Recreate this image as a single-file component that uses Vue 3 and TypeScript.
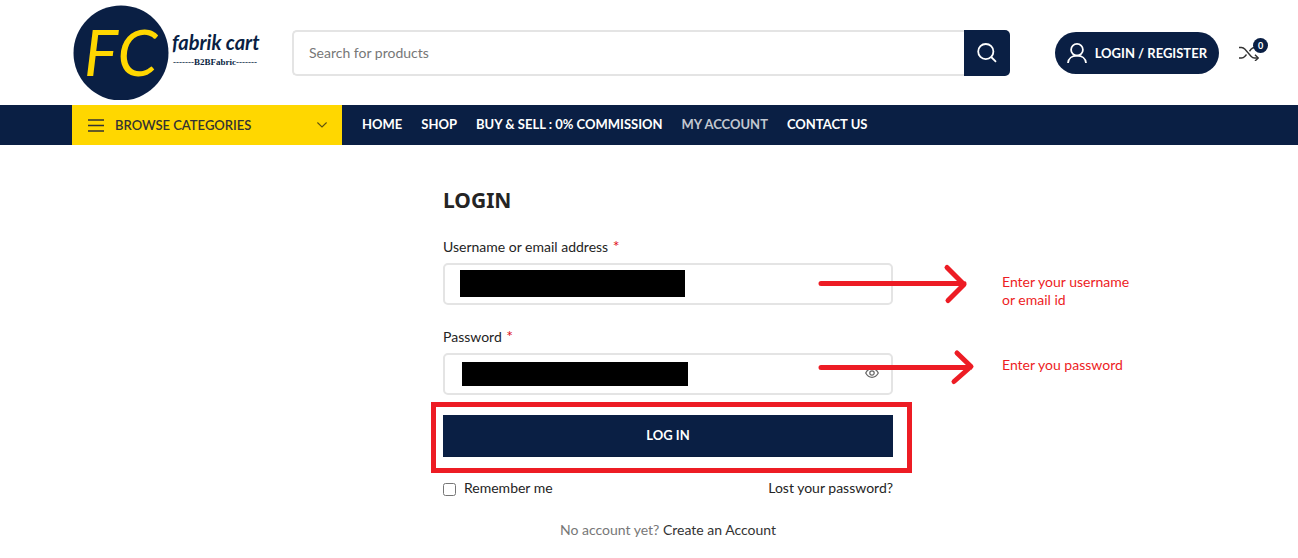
<script setup lang="ts">
import { ref } from 'vue'

interface NavLink {
  label: string
  active?: boolean
}

const links: NavLink[] = [
  { label: 'HOME' },
  { label: 'SHOP' },
  { label: 'BUY & SELL : 0% COMMISSION' },
  { label: 'MY ACCOUNT', active: true },
  { label: 'CONTACT US' },
]

const search = ref('')
const username = ref('')
const password = ref('')
const remember = ref(false)
const compareCount = ref(0)
</script>

<template>
  <div class="page">
    <header class="header">
      <a href="#" class="logo" aria-label="fabrik cart">
        <svg width="190" height="100" viewBox="0 0 190 100">
          <circle cx="49" cy="53" r="47.5" fill="#0a1f44" />
          <text x="12" y="76" class="monogram">FC</text>
          <text x="100" y="50" class="wordmark">fabrik cart</text>
          <text x="101" y="65" class="tagline">-------B2BFabric-------</text>
        </svg>
      </a>

      <form class="search" role="search" @submit.prevent>
        <input v-model="search" type="text" placeholder="Search for products" aria-label="Search for products" />
        <button type="submit" aria-label="Search">
          <svg width="20" height="20" viewBox="0 0 20 20" fill="none" stroke="#fff" stroke-width="1.8">
            <circle cx="8.8" cy="8.6" r="7.6" />
            <path d="M14.2 14 19 18.8" />
          </svg>
        </button>
      </form>

      <a href="#" class="account">
        <svg width="20" height="20" viewBox="0 0 20 20" fill="none" stroke="#fff" stroke-width="1.8">
          <circle cx="10" cy="6.8" r="5.9" />
          <path d="M1 20C1.4 15.400 5 12.700 10 12.700S18.600 15.400 19 20" />
        </svg>
        <span>LOGIN / REGISTER</span>
      </a>

      <a href="#" class="compare" aria-label="Compare">
        <svg width="20" height="16" viewBox="0 0 20 16" fill="none" stroke="#333" stroke-width="1.4">
          <path d="M0 2.500H2.500C4 2.500 5 3.200 6 4.300L12 11.200C13 12.300 14 13 15.500 13H19" />
          <path d="M0 13H2.500C4 13 5 12.300 6 11.200L7.500 9.500M10.500 6.200 12 4.300C13 3.200 14 2.500 15.500 2.500H19" />
          <path d="M16 9.800 19.200 13 16 16" />
        </svg>
        <span class="count">{{ compareCount }}</span>
      </a>
    </header>

    <nav class="navbar">
      <button type="button" class="browse">
        <svg width="16" height="13" viewBox="0 0 16 13" stroke="#333" stroke-width="1.300">
          <path d="M0 1H16M0 6.500H16M0 12H16" />
        </svg>
        <span>BROWSE CATEGORIES</span>
        <svg class="chevron" width="10" height="6" viewBox="0 0 10 6" fill="none" stroke="#5f5210" stroke-width="1.100">
          <path d="M0.400 0.500 5 5 9.600 0.500" />
        </svg>
      </button>
      <ul class="links">
        <li v-for="link in links" :key="link.label">
          <a href="#" :class="{ active: link.active }">{{ link.label }}</a>
        </li>
      </ul>
    </nav>

    <main class="main">
      <form class="login" @submit.prevent>
        <h1>LOGIN</h1>

        <div class="field">
          <label for="username">Username or email address <span class="required">*</span></label>
          <div class="control">
            <input id="username" v-model="username" type="text" autocomplete="username" />
            <span class="redaction user-mask"></span>
            <svg class="arrow" width="160" height="42" viewBox="0 0 160 42">
              <path d="M3 20.500H146M129 4.500 146 21.500 130 37.500" />
            </svg>
            <p class="note">Enter your username<br />or email id</p>
          </div>
        </div>

        <div class="field">
          <label for="password">Password <span class="required">*</span></label>
          <div class="control">
            <input id="password" v-model="password" type="password" autocomplete="current-password" />
            <span class="redaction pass-mask"></span>
            <button type="button" class="reveal" aria-label="Show password">
              <svg width="14" height="10" viewBox="0 0 14 10" fill="none" stroke="#666" stroke-width="1.200">
                <path d="M0.700 5C2.200 2.200 4.300 0.700 7 0.700S11.800 2.200 13.300 5C11.800 7.800 9.700 9.300 7 9.300S2.200 7.800 0.700 5Z" />
                <circle cx="7" cy="5" r="2.200" />
              </svg>
            </button>
            <svg class="arrow" width="160" height="42" viewBox="0 0 160 42">
              <path d="M3 14.500H152M139 0 153 13.500 136 28.500" />
            </svg>
            <p class="note">Enter you password</p>
          </div>
        </div>

        <div class="submit">
          <button type="submit">LOG IN</button>
        </div>

        <div class="options">
          <label class="remember"><input v-model="remember" type="checkbox" />Remember me</label>
          <a href="#">Lost your password?</a>
        </div>

        <p class="signup">No account yet? <a href="#">Create an Account</a></p>
      </form>
    </main>
  </div>
</template>

<style>
body {
  margin: 0;
  background: #fff;
}
</style>

<style scoped>
.page {
  color: #242424;
  font-family: Lato, "Liberation Sans", sans-serif;
  font-size: 14px;
  line-height: 20px;
  overflow-x: hidden;
}

.page * {
  box-sizing: border-box;
}

a {
  color: inherit;
  text-decoration: none;
}

button,
input {
  font: inherit;
}

button {
  border: 0;
  cursor: pointer;
}

.header {
  display: flex;
  align-items: center;
  height: 105px;
  padding: 0 39px 0 72px;
}

.logo {
  display: block;
  height: 105px;
  margin-right: 30px;
}

.logo svg {
  display: block;
}

.monogram {
  fill: #ffd700;
  font: italic 400 64px Lato, sans-serif;
}

.wordmark {
  fill: #0a1f44;
  font: italic 700 20px Lato, sans-serif;
}

.tagline {
  fill: #0a1f44;
  font: 700 9px "Liberation Serif", serif;
}

.search {
  display: flex;
  flex: 1;
  height: 46px;
  margin-right: 45px;
}

.search input {
  flex: 1;
  min-width: 0;
  padding: 0 15px;
  border: 2px solid #e4e4e4;
  border-right: 0;
  border-radius: 5px 0 0 5px;
  outline: none;
  color: #777;
}

.search input::placeholder {
  color: #777;
  opacity: 1;
}

.search button {
  display: grid;
  place-items: center;
  width: 46px;
  padding: 0;
  border-radius: 0 5px 5px 0;
  background: #0a1f44;
}

.account {
  display: flex;
  align-items: center;
  gap: 8px;
  height: 42px;
  margin-right: 20px;
  padding: 0 12px;
  border-radius: 21px;
  background: #0a1f44;
  color: #fff;
  font-size: 13px;
  font-weight: 700;
  white-space: nowrap;
}

.compare {
  position: relative;
  display: flex;
}

.compare svg {
  display: block;
}

.count {
  position: absolute;
  top: -7px;
  right: -9px;
  width: 15px;
  height: 15px;
  border-radius: 50%;
  background: #0a1f44;
  color: #fff;
  font-size: 9px;
  font-weight: 700;
  line-height: 15px;
  text-align: center;
}

.navbar {
  display: flex;
  height: 40px;
  padding-left: 72px;
  background: #0a1f44;
}

.browse {
  display: flex;
  align-items: center;
  gap: 11px;
  width: 270px;
  padding: 0 15px 0 16px;
  background: #ffd700;
  color: #333;
  font-size: 13px;
  font-weight: 600;
}

.chevron {
  margin-left: auto;
}

.links {
  display: flex;
  align-items: center;
  gap: 19px;
  margin: 0;
  padding: 0 20px 2px;
  color: #fff;
  font-size: 13px;
  font-weight: 700;
  list-style: none;
  white-space: nowrap;
}

.active {
  color: #c2c7d0;
}

.main {
  padding: 43px 34px 16px 72px;
}

.login {
  width: 450px;
  margin: 0 auto;
}

h1 {
  margin: 0 0 25px;
  font-family: "Noto Sans", sans-serif;
  font-size: 21px;
  font-weight: 700;
  line-height: 24px;
}

.field {
  margin-bottom: 22px;
}

.field label {
  display: block;
  margin-bottom: 6px;
}

.required {
  margin-left: 1px;
  color: #e01020;
  font-size: 16px;
  line-height: 16px;
}

.control {
  position: relative;
}

.control input {
  display: block;
  width: 100%;
  height: 42px;
  padding: 0 15px;
  border: 2px solid #e4e4e4;
  border-radius: 5px;
  outline: none;
}

.redaction {
  position: absolute;
  background: #000;
}

.user-mask {
  top: 7px;
  left: 17px;
  width: 225px;
  height: 27px;
}

.pass-mask {
  top: 9px;
  left: 19px;
  width: 226px;
  height: 24px;
}

.reveal {
  position: absolute;
  top: 15px;
  right: 14px;
  padding: 0;
  background: none;
}

.reveal svg {
  display: block;
}

.arrow {
  position: absolute;
  top: 0;
  left: 375px;
  overflow: visible;
  fill: none;
  stroke: #ed1c24;
  stroke-width: 5;
  stroke-linecap: round;
  stroke-linejoin: round;
}

.note {
  position: absolute;
  top: 10px;
  left: 559px;
  margin: 0;
  color: #ed1c24;
  line-height: 18px;
  white-space: nowrap;
}

.pass-mask ~ .note {
  top: 3px;
}

.submit {
  position: relative;
}

/* Red frame that calls out the submit button */
.submit::after {
  position: absolute;
  inset: -13px -19px -16px -12px;
  border: 5px solid #ed1c24;
  content: "";
  pointer-events: none;
}

.field:has(+ .submit) {
  margin-bottom: 20px;
}

.submit button {
  display: block;
  width: 100%;
  height: 42px;
  padding: 0 0 2px;
  border-bottom: 1px solid #091c3d;
  background: #0a1f44;
  color: #fff;
  font-size: 13px;
  font-weight: 700;
}

.options {
  display: flex;
  justify-content: space-between;
  margin-top: 21px;
}

.remember {
  display: flex;
  align-items: center;
  gap: 8px;
}

.remember input {
  width: 13px;
  height: 13px;
  margin: 2px 0 0;
}

.signup {
  margin: 22px 0 0;
  color: #777;
  text-align: center;
}

.signup a {
  color: #333;
}
</style>
